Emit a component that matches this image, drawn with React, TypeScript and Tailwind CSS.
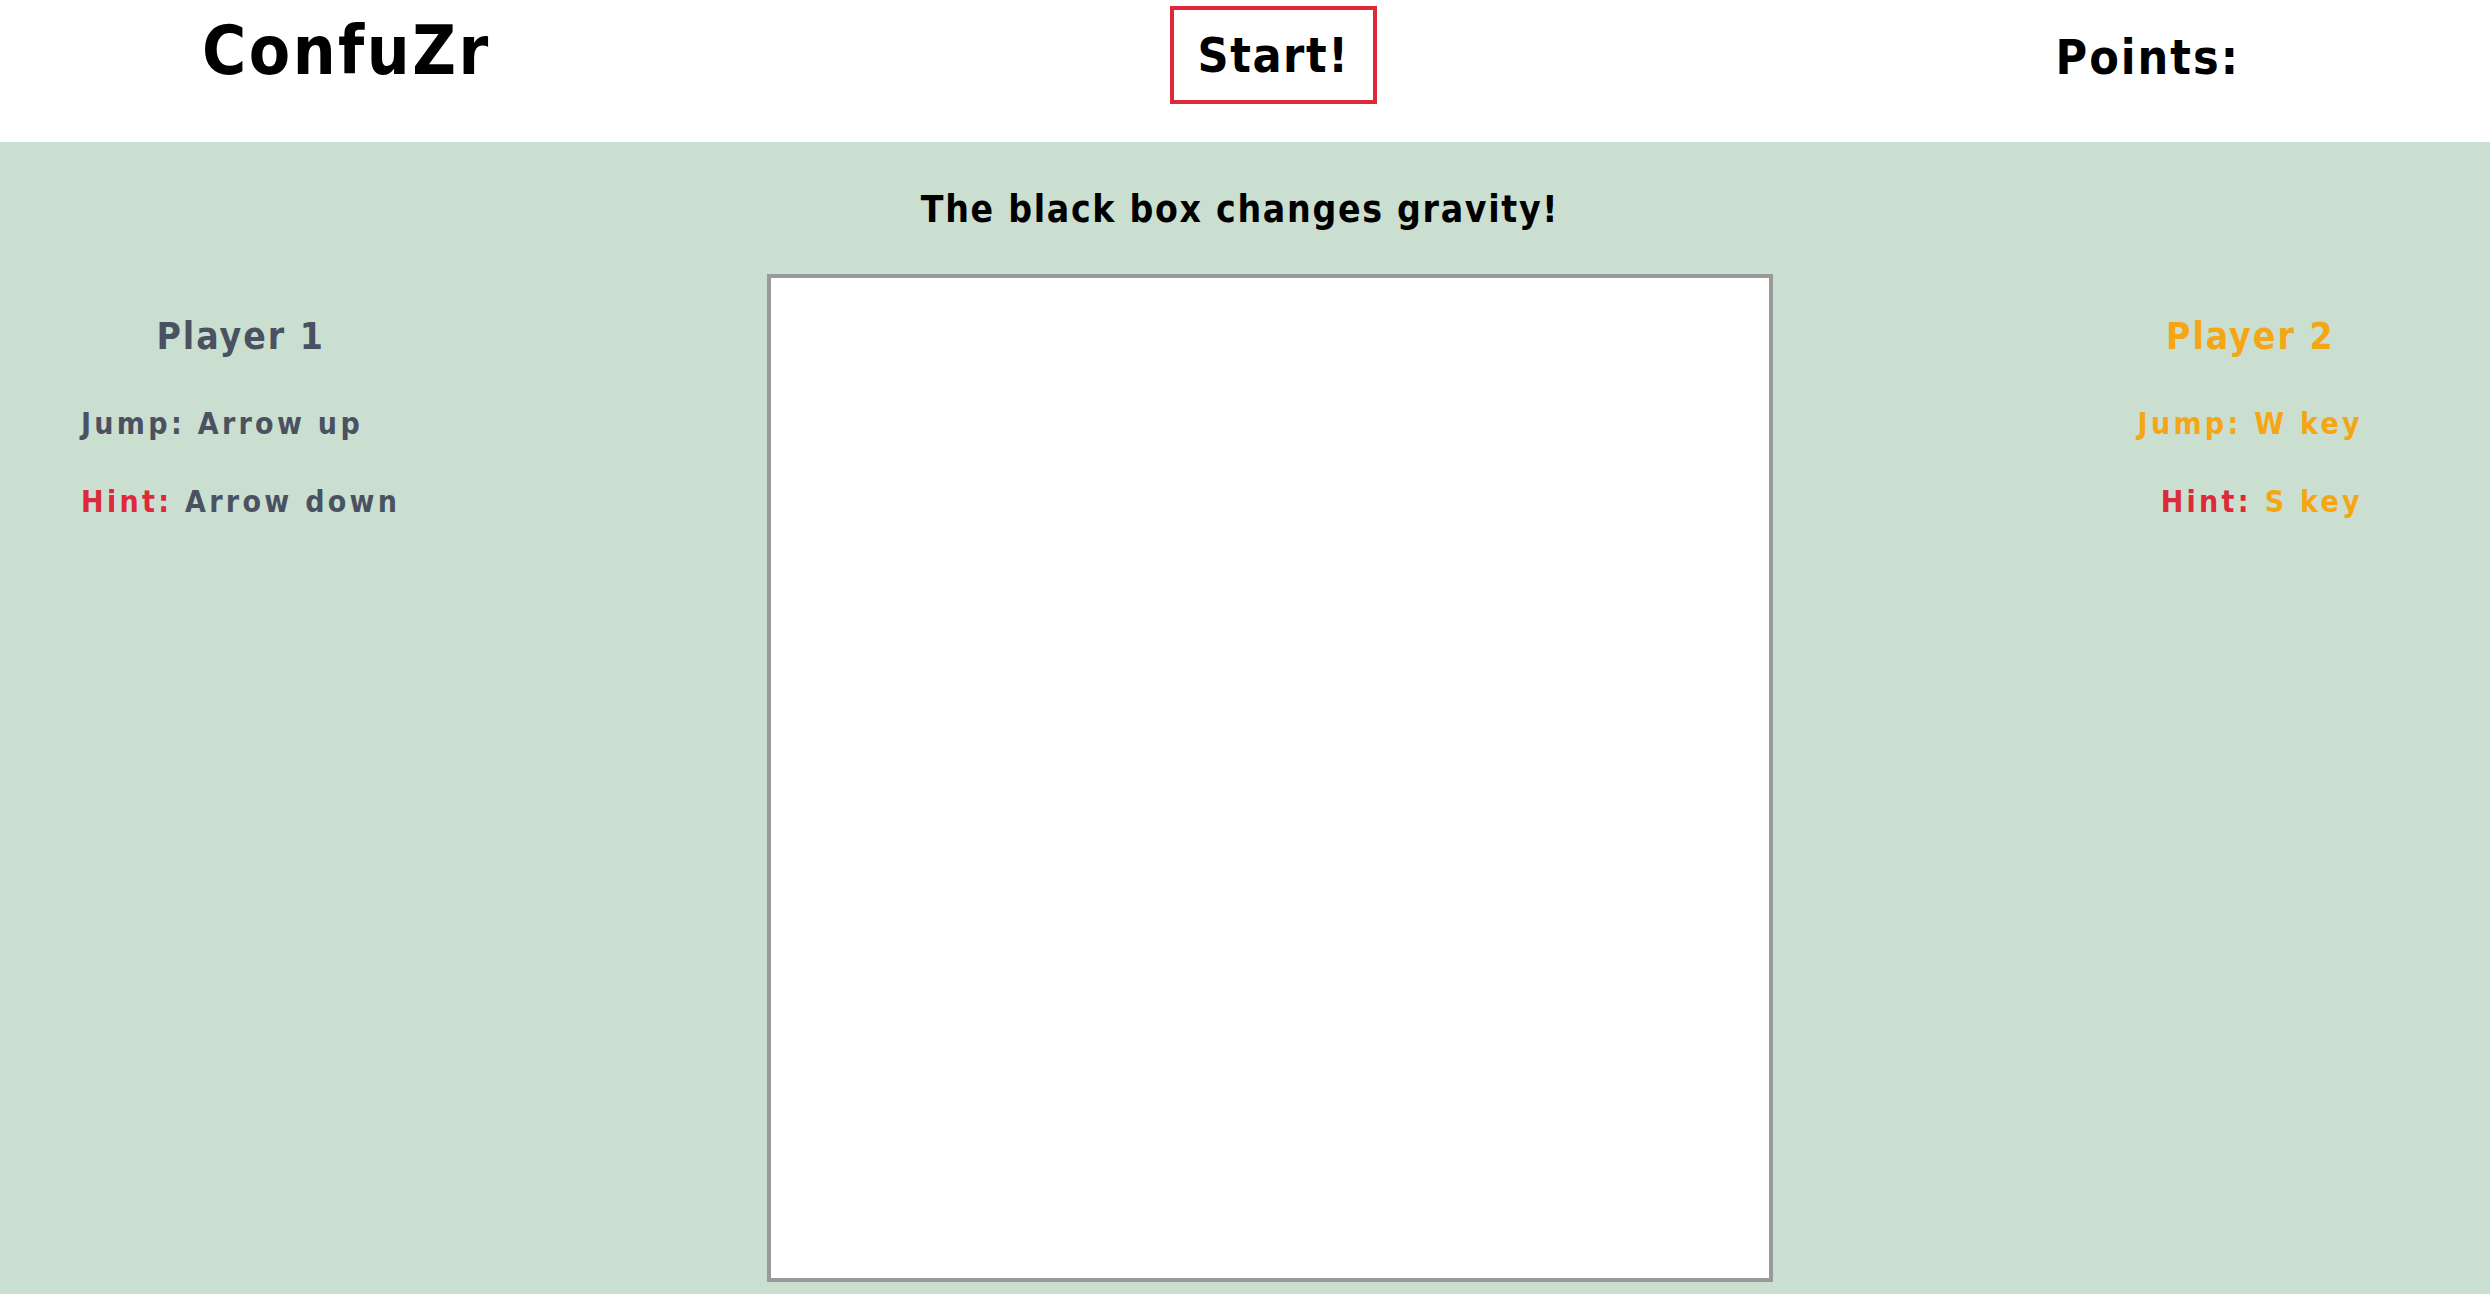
const font = "font-['DejaVu_Sans_Condensed','DejaVu_Sans',sans-serif]";

function PlayerCard({
  title,
  jump,
  hint,
  tone,
  align,
}: {
  title: string;
  jump: string;
  hint: string;
  tone: string;
  align: "left" | "right";
}) {
  return (
    <div className={`w-fit ${tone} ${align === "right" ? "text-right" : "text-left"}`}>
      <h2 className="mt-[44px] text-center text-[37px] leading-none tracking-[2px]">{title}</h2>
      <p className="mt-[54px] text-[30px] leading-none tracking-[3.3px]">Jump: {jump}</p>
      <p className="mt-[48px] text-[30px] leading-none tracking-[3.3px]">
        <span className="text-[#dc2a3a]">Hint:</span> {hint}
      </p>
    </div>
  );
}

export default function App() {
  return (
    <div className={`min-h-screen bg-[#cbdfd1] text-black font-bold ${font}`}>
      <header className="flex h-[142px] items-start bg-white">
        <div className="w-[1170px] shrink-0 pl-[202px]">
          <h1 className="mt-[18px] text-[67px] leading-none tracking-[2.5px]">ConfuZr</h1>
        </div>
        <button className="mt-[6px] flex h-[98px] w-[207px] shrink-0 items-center justify-center border-4 border-[#dc2a3a] bg-white text-[48px] leading-none tracking-[1.6px]">
          Start!
        </button>
        <div className="flex flex-1 justify-end pr-[250px]">
          <span className="mt-[33px] text-[48px] leading-none tracking-[2px]">Points:</span>
        </div>
      </header>

      <main className="pt-[49px]">
        <p className="pr-[10px] text-center text-[37px] leading-none tracking-[1.7px]">
          The black box changes gravity!
        </p>
        <div className="mt-[46px] flex items-start">
          <div className="w-[767px] shrink-0 pl-[81px]">
            <PlayerCard title="Player 1" jump="Arrow up" hint="Arrow down" tone="text-[#4a5262]" align="left" />
          </div>
          <div className="h-[1008px] w-[1006px] shrink-0 border-4 border-[#999999] bg-white" />
          <div className="flex flex-1 justify-end pr-[127px]">
            <PlayerCard title="Player 2" jump="W key" hint="S key" tone="text-[#f5a614]" align="right" />
          </div>
        </div>
      </main>
    </div>
  );
}
